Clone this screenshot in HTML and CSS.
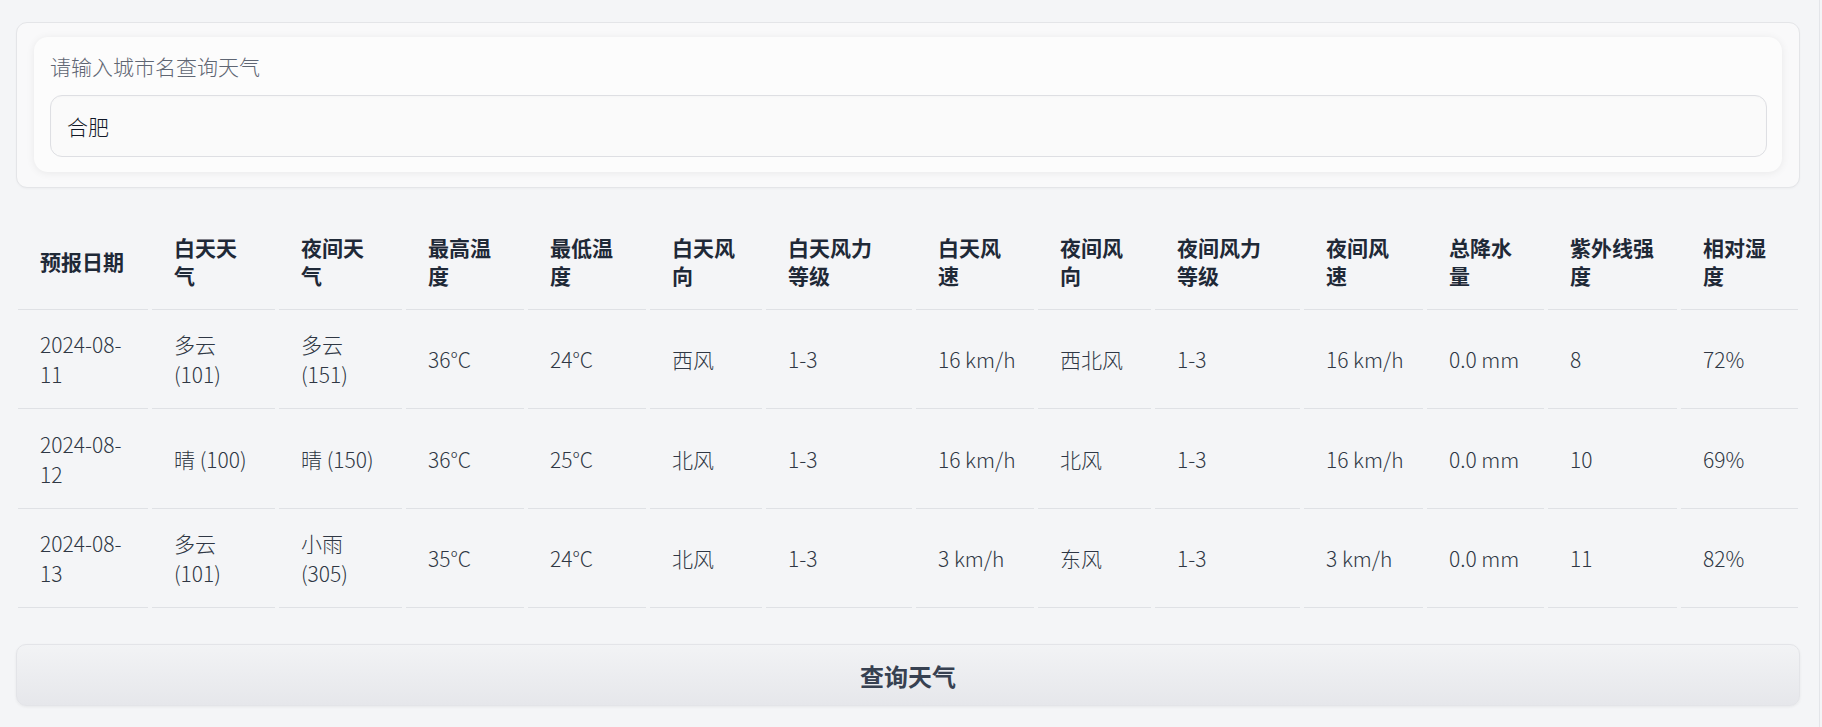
FILE: index.html
```html
<!DOCTYPE html>
<html lang="zh-CN">
<head>
<meta charset="utf-8">
<title>天气查询</title>
<link rel="stylesheet" href="styles.css">
</head>
<body>
<div class="app">
  <div class="form">
    <div class="block">
      <label class="label" for="city">请输入城市名查询天气</label>
      <div class="input" id="city">合肥</div>
    </div>
  </div>

  <table class="weather">
    <colgroup>
      <col class="c1"><col class="c2"><col class="c3"><col class="c4"><col class="c5"><col class="c6"><col class="c7">
      <col class="c8"><col class="c9"><col class="c10"><col class="c11"><col class="c12"><col class="c13"><col class="c14">
    </colgroup>
    <thead>
      <tr>
        <th>预报日期</th><th>白天天气</th><th>夜间天气</th><th>最高温度</th><th>最低温度</th><th>白天风向</th><th>白天风力等级</th>
        <th>白天风速</th><th>夜间风向</th><th>夜间风力等级</th><th>夜间风速</th><th>总降水量</th><th>紫外线强度</th><th>相对湿度</th>
      </tr>
    </thead>
    <tbody>
      <tr>
        <td>2024-08-11</td><td>多云 (101)</td><td>多云 (151)</td><td>36°C</td><td>24°C</td><td>西风</td><td>1-3</td>
        <td>16 km/h</td><td>西北风</td><td>1-3</td><td>16 km/h</td><td>0.0 mm</td><td>8</td><td>72%</td>
      </tr>
      <tr>
        <td>2024-08-12</td><td>晴 (100)</td><td>晴 (150)</td><td>36°C</td><td>25°C</td><td>北风</td><td>1-3</td>
        <td>16 km/h</td><td>北风</td><td>1-3</td><td>16 km/h</td><td>0.0 mm</td><td>10</td><td>69%</td>
      </tr>
      <tr>
        <td>2024-08-13</td><td>多云 (101)</td><td>小雨 (305)</td><td>35°C</td><td>24°C</td><td>北风</td><td>1-3</td>
        <td>3 km/h</td><td>东风</td><td>1-3</td><td>3 km/h</td><td>0.0 mm</td><td>11</td><td>82%</td>
      </tr>
    </tbody>
  </table>

  <button class="submit" type="button">查询天气</button>
</div>
</body>
</html>
```

FILE: styles.css
```css
html, body {
  margin: 0;
  padding: 0;
  background: #f4f5f7;
  overflow: hidden;
}

body {
  font-family: "Noto Sans CJK SC", "Noto Sans", sans-serif;
  font-size: 21px;
  color: #374151;
}

.app {
  width: 1820px;
  height: 727px;
  box-sizing: border-box;
  padding: 22px 19px 0 16px;
  border-right: 1px solid #e3e5e9;
  display: flex;
  flex-direction: column;
}

.form {
  background: #f9f9fa;
  border: 1px solid #e4e5e8;
  border-radius: 11px;
  padding: 14px 17px 15px 17px;
  box-shadow: 0 1px 2px rgba(0, 0, 0, 0.03);
}

.block {
  background: #fcfcfc;
  border-radius: 14px;
  padding: 16px 15px 15px 16px;
  box-shadow: 0 1px 8px rgba(0, 0, 0, 0.07);
  display: flex;
  flex-direction: column;
  gap: 16px;
}

.label {
  display: block;
  color: #5f6673;
  line-height: 26px;
  height: 26px;
  font-weight: 300;
}

.input {
  height: 62px;
  box-sizing: border-box;
  border: 1px solid #dedfe3;
  border-radius: 12px;
  background: #fafafa;
  padding: 0 16px;
  display: flex;
  align-items: center;
  color: #111827;
  font-weight: 300;
  box-shadow: inset 0 1px 2px rgba(0, 0, 0, 0.02);
}

.weather {
  margin: 25px -2px 0 -2px;
  width: 1788px;
  table-layout: fixed;
  border-collapse: separate;
  border-spacing: 4px 0;
}

.c1 { width: 130px; }
.c2 { width: 123px; }
.c3 { width: 123px; }
.c4 { width: 118px; }
.c5 { width: 118px; }
.c6 { width: 112px; }
.c7 { width: 146px; }
.c8 { width: 118px; }
.c9 { width: 113px; }
.c10 { width: 145px; }
.c11 { width: 119px; }
.c12 { width: 117px; }
.c13 { width: 129px; }
.c14 { width: 117px; }

.weather th,
.weather td {
  text-align: left;
  vertical-align: middle;
  padding: 20px 22px;
  border-bottom: 1.5px solid #dfe1e5;
}

.weather th {
  font-weight: 700;
  color: #1f2937;
  line-height: 28px;
  padding-top: 20px;
  padding-bottom: 19.5px;
}

.weather td {
  line-height: 30px;
  color: #2f3744;
  font-weight: 300;
  height: 60px;
  padding-top: 19.5px;
  padding-bottom: 19px;
}

.weather td:nth-child(n+4) {
  white-space: nowrap;
}

.submit {
  margin-top: 36px;
  height: 62px;
  width: 100%;
  border: 1px solid #e3e4e8;
  border-radius: 10px;
  background: linear-gradient(180deg, #f2f3f5 0%, #e6e7eb 100%);
  font-family: "Noto Sans CJK SC", "Noto Sans", sans-serif;
  font-size: 24px;
  font-weight: 700;
  color: #374151;
  box-shadow: 0 1px 3px rgba(0, 0, 0, 0.06);
  cursor: pointer;
}
```
